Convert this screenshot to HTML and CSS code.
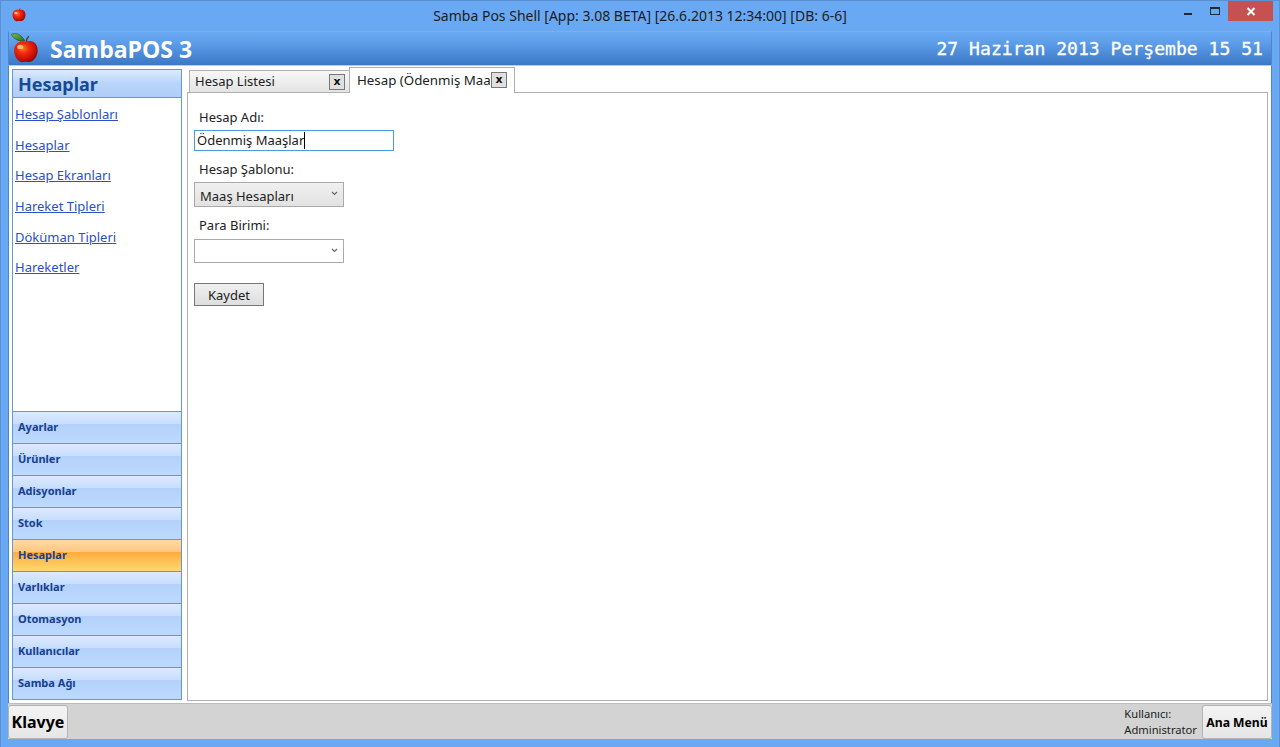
FILE: index.html
```html
<!DOCTYPE html>
<html lang="tr">
<head>
<meta charset="utf-8">
<title>Samba Pos Shell</title>
<link rel="stylesheet" href="styles.css">
</head>
<body>
<svg class="defs" width="0" height="0" aria-hidden="true">
  <defs>
    <radialGradient id="apple" cx="0.38" cy="0.35" r="0.72">
      <stop offset="0" stop-color="#ff7a1e"/>
      <stop offset="0.35" stop-color="#f02a0c"/>
      <stop offset="0.75" stop-color="#c20d05"/>
      <stop offset="1" stop-color="#7c0a04"/>
    </radialGradient>
    <linearGradient id="leaf" x1="0" y1="0" x2="1" y2="1">
      <stop offset="0" stop-color="#7fbf4a"/>
      <stop offset="1" stop-color="#1d6a26"/>
    </linearGradient>
    <symbol id="apple-icon" viewBox="0 0 30 34">
      <path d="M1 3.500C6 1.500 11 3 15.500 10.500C10 11.500 4 9.500 1 3.500Z" fill="url(#leaf)" stroke="#174f1c" stroke-width=".6"/>
      <path d="M17 12C17 9 17.800 7 19.500 5.500" fill="none" stroke="#5b3a1c" stroke-width="1.400"/>
      <path d="M16.500 11.500C21 9.500 28.500 11 29 20C29.400 27 24 33.500 19.500 33C17.500 32.800 16 32.300 14 33C9 34 4 28 4 20.500C4 12 12 9.500 16.500 11.500Z" fill="url(#apple)"/>
      <ellipse cx="10.500" cy="17" rx="3.200" ry="2.400" fill="#ffd9a0" opacity=".75"/>
    </symbol>
    <symbol id="apple-small" viewBox="3 8 27 26">
      <path d="M17 12C17 10 17.500 9 19 8" fill="none" stroke="#5b3a1c" stroke-width="1.400"/>
      <path d="M16.500 11.500C21 9.500 28.500 11 29 20C29.400 27 24 33.500 19.500 33C17.500 32.800 16 32.300 14 33C9 34 4 28 4 20.500C4 12 12 9.500 16.500 11.500Z" fill="url(#apple)"/>
      <ellipse cx="10.500" cy="17" rx="3.200" ry="2.400" fill="#ffd9a0" opacity=".75"/>
    </symbol>
  </defs>
</svg>
<div class="window">
  <div class="titlebar">
    <svg class="title-icon" aria-hidden="true"><use href="#apple-small"/></svg>
    <div class="title-text">Samba Pos Shell [App: 3.08 BETA] [26.6.2013 12:34:00] [DB: 6-6]</div>
    <div class="controls">
      <div class="ctl-min"><span></span></div>
      <div class="ctl-max"><span></span></div>
      <div class="ctl-close">
        <svg width="10" height="9" viewBox="0 0 10 9" aria-hidden="true"><path d="M1.500 1L8.500 8M8.500 1L1.500 8" stroke="#fff" stroke-width="2"/></svg>
      </div>
    </div>
  </div>
  <div class="appbar">
    <svg class="app-icon" aria-hidden="true"><use href="#apple-icon"/></svg>
    <div class="app-name">SambaPOS 3</div>
    <div class="app-clock">27 Haziran 2013 Perşembe 15 51</div>
  </div>
  <div class="main">
    <div class="sidebar">
      <div class="side-head">Hesaplar</div>
      <div class="side-links">
        <a class="side-link" href="#">Hesap Şablonları</a>
        <a class="side-link" href="#">Hesaplar</a>
        <a class="side-link" href="#">Hesap Ekranları</a>
        <a class="side-link" href="#">Hareket Tipleri</a>
        <a class="side-link" href="#">Döküman Tipleri</a>
        <a class="side-link" href="#">Hareketler</a>
      </div>
      <div class="nav">
        <div class="nav-item">Ayarlar</div>
        <div class="nav-item">Ürünler</div>
        <div class="nav-item">Adisyonlar</div>
        <div class="nav-item">Stok</div>
        <div class="nav-item active">Hesaplar</div>
        <div class="nav-item">Varlıklar</div>
        <div class="nav-item">Otomasyon</div>
        <div class="nav-item">Kullanıcılar</div>
        <div class="nav-item">Samba Ağı</div>
      </div>
    </div>
    <div class="workspace">
      <div class="tabs">
        <div class="tab">
          <span class="tab-label">Hesap Listesi</span>
          <span class="tab-x">x</span>
        </div>
        <div class="tab selected">
          <span class="tab-label">Hesap (Ödenmiş Maaşlar)</span>
          <span class="tab-x">x</span>
        </div>
      </div>
      <div class="panel">
        <div class="field-label">Hesap Adı:</div>
        <div class="text-input"><span>Ödenmiş Maaşlar</span><i class="caret"></i></div>
        <div class="field-label spaced">Hesap Şablonu:</div>
        <div class="combo filled"><span>Maaş Hesapları</span>
          <svg class="chev" width="7" height="5" viewBox="0 0 7 5" aria-hidden="true"><path d="M1 1L3.500 3.500L6 1" fill="none" stroke="#666" stroke-width="1.100"/></svg>
        </div>
        <div class="field-label spaced">Para Birimi:</div>
        <div class="combo empty">
          <svg class="chev" width="7" height="5" viewBox="0 0 7 5" aria-hidden="true"><path d="M1 1L3.500 3.500L6 1" fill="none" stroke="#666" stroke-width="1.100"/></svg>
        </div>
        <div class="save">Kaydet</div>
      </div>
    </div>
  </div>
  <div class="footer">
    <div class="foot-btn klavye">Klavye</div>
    <div class="user"><div>Kullanıcı:</div><div>Administrator</div></div>
    <div class="foot-btn menu">Ana Menü</div>
  </div>
</div>
</body>
</html>
```
FILE: styles.css
```css
* { box-sizing: border-box; }
html, body { margin: 0; padding: 0; }
body { width: 1280px; height: 747px; overflow: hidden; background: #69a9f3; font-family: "Noto Sans", "Open Sans", sans-serif; }
.defs { position: absolute; }
.window { width: 1280px; height: 747px; display: flex; flex-direction: column; background: #69a9f3; border-top: 1px solid #5b8fd0; border-left: 1px solid #5b8fd0; border-right: 1px solid #5b8fd0; padding-bottom: 8px; }

.titlebar { height: 30px; flex: none; display: flex; align-items: flex-start; position: relative; }
.title-icon { width: 14px; height: 14px; margin: 7px 0 0 11px; flex: none; }
.title-text { position: absolute; left: 0; right: 0; top: 6px; text-align: center; font-size: 14px; line-height: 18px; color: #1c1c1c; }
.controls { position: absolute; right: 6px; top: 0; display: flex; height: 20px; }
.ctl-min { width: 26px; height: 20px; position: relative; }
.ctl-min span { position: absolute; left: 9px; top: 12px; width: 8px; height: 2px; background: #1e2a3a; }
.ctl-max { width: 27px; height: 20px; position: relative; }
.ctl-max span { position: absolute; left: 9px; top: 6px; width: 10px; height: 8px; border: 1px solid #1e2a3a; border-top-width: 2px; }
.ctl-close { width: 45px; height: 20px; background: #c75050; display: flex; align-items: center; justify-content: center; }

.appbar { height: 34px; flex: none; margin: 0 7px; display: flex; align-items: center; position: relative; background: linear-gradient(#6aaaf4 0%, #5f9fea 30%, #3b78c6 100%); border-top: 1px solid #7db0ea; border-left: 1px solid #4f86c8; border-right: 1px solid #4f86c8; }
.app-icon { position: absolute; left: 1px; top: -1px; width: 29px; height: 32px; }
.app-name { margin-left: 41px; font-size: 23px; font-weight: 700; color: #fff; line-height: 30px; font-family: "Open Sans", "Noto Sans", sans-serif; }
.app-clock { margin-left: auto; margin-right: 8px; font-family: "DejaVu Sans Mono", monospace; font-size: 18.080px; font-weight: 400; color: #fff; line-height: 24px; -webkit-text-stroke: 0.3px #fff; }

.main { flex: 1; min-height: 0; margin: 0 7px; background: #fff; display: flex; padding: 3px; gap: 5px; border-top: 1px solid #c8c8c8; border-left: 1px solid #4f86c8; border-right: 1px solid #4f86c8; }

.sidebar { width: 170px; flex: none; display: flex; flex-direction: column; border: 1px solid #6a96d0; background: #fff; }
.side-head { height: 28px; flex: none; padding-left: 5px; font-size: 18px; font-weight: 700; line-height: 29px; color: #154a96; background: linear-gradient(#dceaff 0%, #b9d5fb 50%, #aecdf8 100%); border-bottom: 1px solid #6a96d0; }
.side-links { flex: 1; display: flex; flex-direction: column; padding: 7px 0 0 2px; }
.side-link { height: 30.670px; font-size: 13px; line-height: 18px; color: #2b50c8; text-decoration: underline; }
.nav { flex: none; }
.nav-item { height: 32px; padding: 7px 0 0 5px; border-top: 1px solid #6a96d0; font-size: 11px; font-weight: 700; line-height: 16px; color: #173f8e; background: linear-gradient(#dce9ff 0%, #c7defd 40%, #b3d2fb 40%, #bdd9fe 100%); }
.nav-item.active { background: linear-gradient(#ffd9a4 0%, #ffc77f 40%, #ffab3c 40%, #ffd970 100%); }

.workspace { flex: 1; min-width: 0; display: flex; flex-direction: column; margin-bottom: -1px; }
.tabs { height: 23px; flex: none; display: flex; align-items: flex-end; padding-left: 2px; position: relative; z-index: 1; }
.tab { width: 161px; height: 22px; display: flex; align-items: center; justify-content: space-between; padding: 0 4px 0 5px; background: linear-gradient(#f7f7f7, #e4e4e4); border: 1px solid #b0b0b0; border-bottom: none; }
.tab.selected { width: 166px; height: 26px; margin-left: -1px; margin-bottom: -1px; background: #fff; padding: 0 7px 1px 7px; }
.tab-label { font-size: 13px; line-height: 18px; margin-top: -2px; color: #222; white-space: nowrap; overflow: hidden; flex: 1; min-width: 0; }
.selected .tab-label { font-size: 13.300px; margin-top: 0; }
.tab-x { width: 16px; height: 16px; flex: none; background: #e0e0e0; border: 1px solid #777; font-size: 11px; font-weight: 700; line-height: 13px; text-align: center; color: #111; font-family: "DejaVu Sans", sans-serif; }
.panel { flex: 1; min-height: 0; border: 1px solid #b0b0b0; padding: 15px 0 0 6px; background: #fff; }
.field-label { margin-left: 5px; font-size: 13px; line-height: 18px; color: #222; }
.field-label.spaced { margin-top: 9px; }
.text-input { width: 200px; height: 21px; margin-top: 4px; border: 1px solid #4a9ae0; font-size: 13px; line-height: 19px; padding-left: 2px; color: #1a1a1a; display: flex; }
.caret { display: block; width: 1px; height: 17px; margin-top: 1px; background: #000; }
.combo { width: 150px; position: relative; border: 1px solid #aaa; font-size: 13px; color: #222; padding-left: 5px; }
.combo.filled { height: 25px; margin-top: 4px; line-height: 27px; background: linear-gradient(#f0f0f0, #e2e2e2); }
.combo.empty { height: 24px; margin-top: 5px; background: #fff; }
.chev { position: absolute; right: 5px; top: 8px; }
.save { width: 70px; height: 23px; margin-top: 20px; border: 1px solid #777; background: linear-gradient(#f0f0f0, #dedede); font-size: 13px; line-height: 22px; text-align: center; color: #222; }

.footer { height: 36px; flex: none; margin: 0 7px; padding: 1px 0 0; background: #d3d3d3; display: flex; align-items: stretch; border-top: 1px solid #bdbdbd; }
.foot-btn { background: linear-gradient(#f4f4f4, #e6e6e6); border: 1px solid #b5b5b5; border-radius: 3px; color: #000; font-weight: 700; display: flex; align-items: center; justify-content: center; }
.klavye { width: 60px; font-size: 16px; }
.user { margin-left: auto; margin-right: 5px; font-size: 11.200px; line-height: 16px; color: #222; padding-top: 1px; }
.menu { width: 70px; font-size: 12.200px; }
```
